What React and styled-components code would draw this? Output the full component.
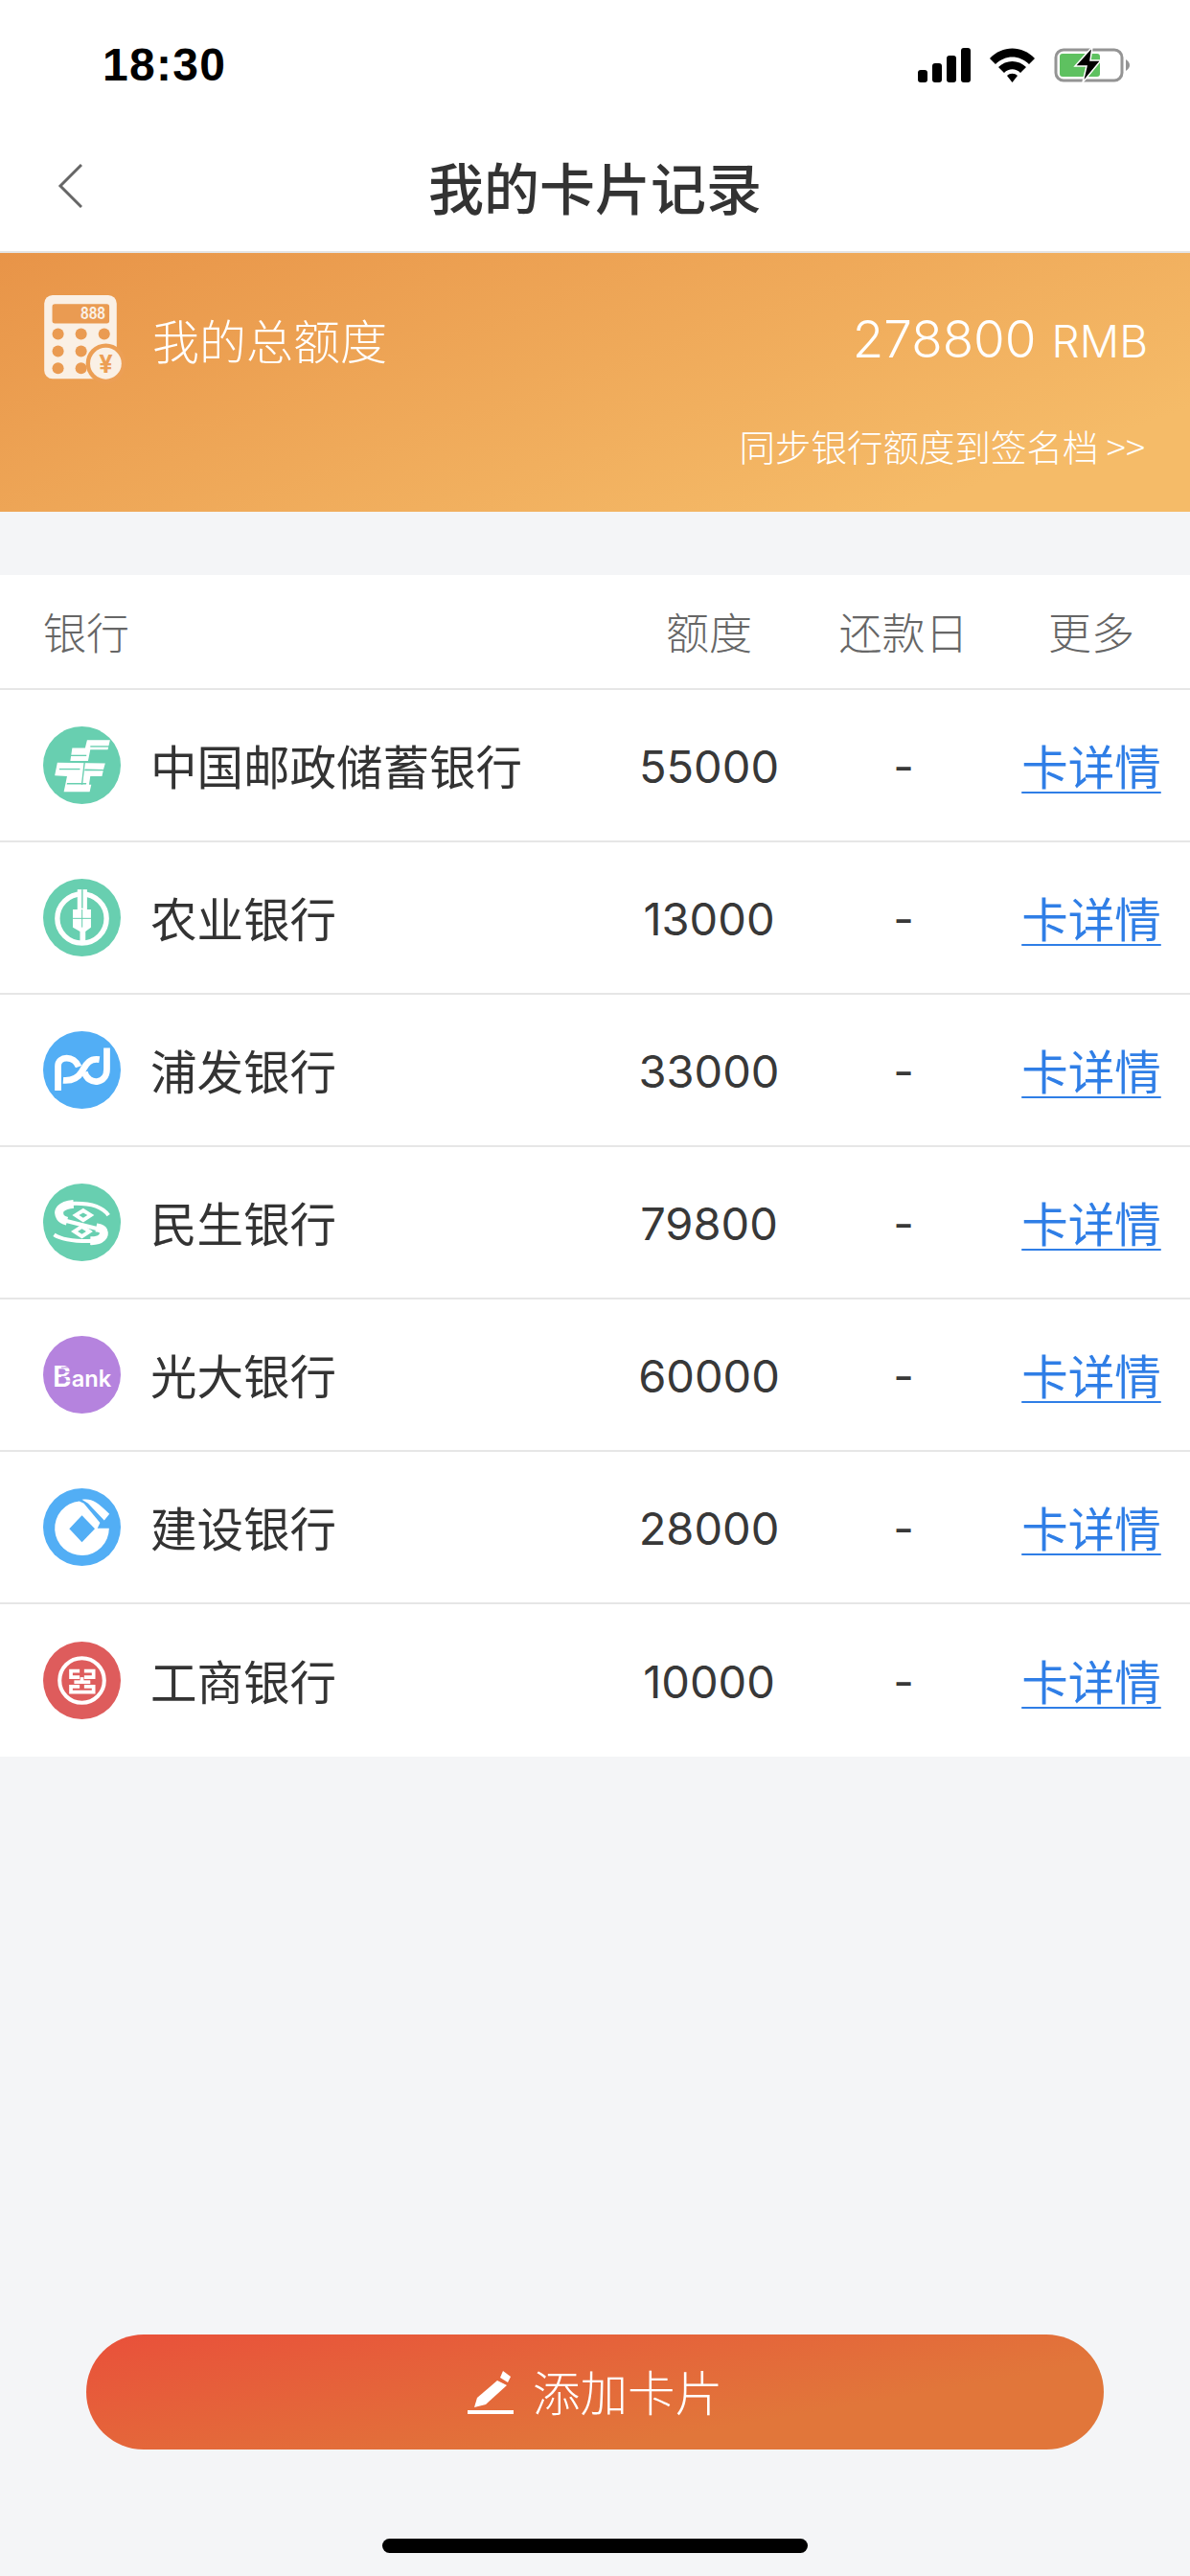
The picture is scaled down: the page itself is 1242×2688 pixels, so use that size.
import styled, { createGlobalStyle } from "styled-components";

const cn = '"Noto Sans CJK SC", sans-serif';
const num = 'Inter, "Noto Sans CJK SC", sans-serif';

const GlobalStyle = createGlobalStyle`
  html, body { margin: 0; padding: 0; background: #f4f5f7; }
  * { box-sizing: border-box; }
`;

const Page = styled.div`
  width: 1242px;
  height: 2688px;
  display: flex;
  flex-direction: column;
  background: #f4f5f7;
  font-family: ${cn};
  overflow: hidden;
`;

const StatusBar = styled.div`
  height: 130px;
  background: #fff;
  display: flex;
  justify-content: space-between;
  align-items: flex-start;
  padding: 50px 62px 0 107px;
`;

const Time = styled.div`
  font-family: "Liberation Sans", Arial, sans-serif;
  font-weight: 700;
  font-size: 48px;
  line-height: 36px;
  color: #000;
  letter-spacing: 1.3px;
`;

const StatusIcons = styled.div`
  display: flex;
  align-items: center;
  gap: 20px;
  height: 36px;
`;

const Nav = styled.div`
  height: 134px;
  background: #fff;
  border-bottom: 2px solid #e4e4e4;
  display: grid;
  grid-template-columns: 1fr auto 1fr;
  align-items: center;
  padding-bottom: 4px;
`;

const BackLink = styled.div`
  padding-left: 60px;
  display: flex;
`;

const Title = styled.h1`
  margin: 0;
  font-size: 58px;
  font-weight: 500;
  color: #333;
  line-height: 1;
`;

const Banner = styled.div`
  height: 270px;
  background: linear-gradient(160deg, #e89448 0%, #f5bb68 85%);
  padding: 44px 44px 0 46px;
  color: #fff;
  display: flex;
  flex-direction: column;
`;

const BannerTop = styled.div`
  display: flex;
  align-items: center;
  height: 92px;
`;

const BannerLabel = styled.div`
  font-size: 49px;
  font-weight: 300;
  margin-left: 27px;
  line-height: 1;
  padding-bottom: 2px;
`;

const Total = styled.div`
  margin-left: auto;
  font-family: ${num};
  font-weight: 300;
  font-size: 53px;
  line-height: 1;
  span { font-size: 46px; margin-left: 16px; }
`;

const Sync = styled.div`
  margin-top: 46px;
  align-self: flex-end;
  font-size: 37.5px;
  font-weight: 300;
  line-height: 1;
  margin-right: 3px;
`;

const Table = styled.div`
  margin-top: 66px;
  background: #fff;
`;

const Row = styled.div`
  display: grid;
  grid-template-columns: 585px 220px 186px 206px;
  align-items: center;
  padding-left: 45px;
  height: ${(p) => p.$h}px;
  border-bottom: ${(p) => (p.$last ? "none" : "2px solid #e6e6e6")};
`;

const HeadCell = styled.div`
  font-size: 45px;
  font-weight: 300;
  color: #666;
  text-align: ${(p) => (p.$left ? "left" : "center")};
  padding-bottom: 2px;
`;

const BankCell = styled.div`
  display: flex;
  align-items: center;
  gap: 31px;
`;

const BankName = styled.span`
  font-size: 48.5px;
  font-weight: 400;
  color: #333;
  padding-bottom: 1px;
`;

const Amount = styled.div`
  font-family: ${num};
  font-size: 47px;
  font-weight: 400;
  color: #383838;
  text-align: center;
  padding-top: 2px;
`;

const Dash = styled(Amount)``;

const DetailLink = styled.a`
  font-size: 48.5px;
  font-weight: 400;
  color: #2f7ee6;
  text-decoration: underline;
  text-underline-offset: 7px;
  text-decoration-thickness: 2px;
  text-align: center;
  padding-bottom: 1px;
`;

const Spacer = styled.div`
  flex: 1;
`;

const AddButton = styled.button`
  width: 1062px;
  height: 120px;
  margin: 0 90px 93px;
  border: none;
  border-radius: 60px;
  background: linear-gradient(170deg, #e9503a 0%, #e1763a 70%);
  color: #fff;
  font-family: ${cn};
  font-size: 49.5px;
  font-weight: 300;
  display: flex;
  align-items: center;
  justify-content: center;
  gap: 20px;
  span { padding-bottom: 4px; }
`;

const HomeBar = styled.div`
  width: 444px;
  height: 15px;
  border-radius: 8px;
  background: #000;
  margin: 0 399px 24px;
`;

const BankSvg = styled.svg`
  width: 81px;
  height: 81px;
  flex: none;
`;

// coordinates below come from 3x crops of the logos, circle is at 76..316
function Logo({ color, cy = 178, children }) {
  return (
    <BankSvg viewBox={`76 ${cy - 120} 240 240`}>
      <circle cx="196" cy={cy} r="120" fill={color} />
      {children}
    </BankSvg>
  );
}

function PostalLogo() {
  return (
    <Logo color="#68cfb0" cy={178}>
      <g fill="#fff">
        <polygon points="212,100 283,100 276,130 222,130 215,165 160,165 166,125 206,125" />
        <polygon points="120,170 268,172 263,190 258,212 222,212 218,238 225,238 220,260 140,260 146,232 150,212 112,210" />
      </g>
      <g fill="#68cfb0">
        <rect x="222" y="118" width="60" height="4" />
        <rect x="162" y="146" width="48" height="4" />
        <rect x="126" y="188" width="64" height="4" />
        <polygon points="205,190 264,191 263,195 204,195" />
        <polygon points="150,233 210,233 209,237 149,237" />
        <polygon points="202,170 206,170 198,238 194,238" />
      </g>
    </Logo>
  );
}

function AgriLogo() {
  return (
    <Logo color="#68cfb0" cy={175}>
      <circle cx="196" cy="178" r="76" fill="none" stroke="#fff" strokeWidth="16" />
      <g fill="#fff">
        <rect x="182" y="88" width="30" height="62" />
        <polygon points="168,150 224,150 224,205 207,218 207,250 190,250 190,218 168,205" />
      </g>
      <rect x="195" y="88" width="4" height="58" fill="#68cfb0" />
      <rect x="168" y="176" width="56" height="3" fill="#68cfb0" />
      <rect x="195" y="150" width="3" height="55" fill="#68cfb0" />
    </Logo>
  );
}

function PufaLogo() {
  return (
    <Logo color="#52aef5" cy={172}>
      <g fill="none" stroke="#fff" strokeWidth="20">
        <path d="M122 236 V160 C122 128 172 125 186 162" />
        <path d="M250 140 C212 134 205 165 195 178 C185 195 165 206 138 204" />
        <path d="M204 178 C216 222 273 216 273 170 V104" />
      </g>
    </Logo>
  );
}

function MinshengLogo() {
  return (
    <Logo color="#68cfb0" cy={200}>
      <path
        d="M278 178 C255 145 200 140 160 142 C112 146 105 182 145 195 L245 220 C285 235 262 258 215 258 C170 258 135 255 110 238"
        fill="none"
        stroke="#fff"
        strokeWidth="12"
      />
      <path d="M170 143 C130 146 118 165 130 185 C135 192 142 194 150 196" fill="none" stroke="#fff" strokeWidth="26" />
      <path d="M222 257 C258 258 268 240 262 226 C258 218 250 218 240 216" fill="none" stroke="#fff" strokeWidth="26" />
      <polygon points="200,156 234,178 200,200 166,178" fill="#fff" />
      <polygon points="200,170 213,178 200,186 187,178" fill="#68cfb0" />
      <polygon points="196,206 230,228 196,250 162,228" fill="#fff" />
      <polygon points="196,220 209,228 196,236 183,228" fill="#68cfb0" />
    </Logo>
  );
}

function EverbrightLogo() {
  return (
    <Logo color="#b583de" cy={196}>
      <text x="106" y="232" fontFamily="Inter, sans-serif" fontSize="70" fontWeight="600" fill="#fff">
        <tspan fontSize="88">B</tspan>ank
      </text>
      <g fill="#b583de">
        <rect x="132" y="172" width="30" height="3" />
        <rect x="132" y="186" width="30" height="3" />
        <rect x="132" y="200" width="30" height="3" />
        <rect x="132" y="214" width="30" height="3" />
      </g>
    </Logo>
  );
}

function CcbLogo() {
  return (
    <Logo color="#52aef5" cy={193}>
      <path d="M280 197 A84 84 0 1 1 188 113 L202 120 L252 180 L244 197 Z" fill="#fff" />
      <path d="M196 108 C225 104 240 112 281 152 L265 172 L215 120 Z" fill="#fff" />
      <polygon points="196,157 236,198 196,240 157,198" fill="#52aef5" />
    </Logo>
  );
}

function IcbcLogo() {
  return (
    <Logo color="#de5c5c" cy={190}>
      <circle cx="196" cy="190" r="69" fill="none" stroke="#fff" strokeWidth="12" />
      <g fill="none" stroke="#fff" strokeWidth="11">
        <path d="M189 161 H162 V180 H189" />
        <path d="M203 161 H232 V180 H203" />
        <path d="M172 195 H222" />
        <path d="M189 209 H162 V226 H232 V209 H203" />
        <path d="M196 180 V195" />
      </g>
    </Logo>
  );
}

function Calculator() {
  const cols = [120, 192, 264];
  const rows = [178, 232, 285];
  return (
    <svg width="86" height="92" viewBox="77 57 256 275" style={{ flex: "none" }}>
      <rect x="77" y="57" width="226" height="261" rx="26" fill="#faf0e5" />
      <rect x="102" y="85" width="178" height="60" rx="8" fill="#ea9b52" />
      <text x="190" y="132" fontFamily="Inter, sans-serif" fontWeight="700" fontSize="50" fill="#faf0e5" textLength="78" lengthAdjust="spacingAndGlyphs">
        888
      </text>
      {rows.map((y) => cols.map((x) => <circle key={x + "-" + y} cx={x} cy={y} r="18" fill="#ea9b52" />))}
      <circle cx="269" cy="270" r="62" fill="#ec9f55" />
      <circle cx="269" cy="270" r="49" fill="#faf0e5" />
      <text x="269" y="298" textAnchor="middle" fontFamily="Inter, sans-serif" fontWeight="700" fontSize="76" fill="#ec9f55">
        ¥
      </text>
    </svg>
  );
}

function Signal() {
  return (
    <svg width="55" height="36" viewBox="0 0 55 36">
      <rect x="0" y="23" width="10" height="13" rx="3" fill="#000" />
      <rect x="15" y="16" width="10" height="20" rx="3" fill="#000" />
      <rect x="30" y="8" width="10" height="28" rx="3" fill="#000" />
      <rect x="45" y="0" width="10" height="36" rx="3" fill="#000" />
    </svg>
  );
}

function Wifi() {
  return (
    <svg width="47" height="36" viewBox="0 0 47 36">
      <path d="M0 11 C13 -3 34 -3 47 11 L41 17 C31 7 16 7 6 17 Z" fill="#000" />
      <path d="M9 20 C17 12 30 12 38 20 L32 26 C27 21 20 21 15 26 Z" fill="#000" />
      <path d="M18 29 C21 26 26 26 29 29 L23.5 36 Z" fill="#000" />
    </svg>
  );
}

function Battery() {
  return (
    <svg width="80" height="38" viewBox="0 0 80 38">
      <rect x="2" y="3" width="69" height="32" rx="8" fill="#fff" stroke="#949494" strokeWidth="3" />
      <rect x="6" y="7" width="42" height="24" rx="3" fill="#5ec160" />
      <path d="M75 13 C78 15 79 17 79 19 C79 21 78 23 75 25 Z" fill="#949494" />
      <path d="M40 0 L22 20 H34 L30 37 L49 14 H38 Z" fill="#000" stroke="#fff" strokeWidth="1.5" />
    </svg>
  );
}

function BackArrow() {
  return (
    <svg width="26" height="46" viewBox="0 0 26 46">
      <path d="M25 1 L3 23 L25 45" fill="none" stroke="#666" strokeWidth="3" />
    </svg>
  );
}

function Pencil() {
  return (
    <svg width="48" height="45" viewBox="0 0 48 45">
      <path d="M37 0 L45 6 L42 12 L34 7 Z" fill="#fff" />
      <path d="M31 10 L41 15 L19 35 L7 38 L10 28 Z" fill="#fff" />
      <rect x="0" y="41" width="48" height="4" fill="#fff" />
    </svg>
  );
}

const banks = [
  { name: "中国邮政储蓄银行", amount: "55000", logo: <PostalLogo /> },
  { name: "农业银行", amount: "13000", logo: <AgriLogo /> },
  { name: "浦发银行", amount: "33000", logo: <PufaLogo /> },
  { name: "民生银行", amount: "79800", logo: <MinshengLogo /> },
  { name: "光大银行", amount: "60000", logo: <EverbrightLogo /> },
  { name: "建设银行", amount: "28000", logo: <CcbLogo /> },
  { name: "工商银行", amount: "10000", logo: <IcbcLogo /> },
];

export default function App() {
  return (
    <Page>
      <GlobalStyle />
      <StatusBar>
        <Time>18:30</Time>
        <StatusIcons>
          <Signal />
          <Wifi />
          <Battery />
        </StatusIcons>
      </StatusBar>
      <Nav>
        <BackLink>
          <BackArrow />
        </BackLink>
        <Title>我的卡片记录</Title>
      </Nav>
      <Banner>
        <BannerTop>
          <Calculator />
          <BannerLabel>我的总额度</BannerLabel>
          <Total>
            278800<span>RMB</span>
          </Total>
        </BannerTop>
        <Sync>同步银行额度到签名档 &gt;&gt;</Sync>
      </Banner>
      <Table>
        <Row $h={120}>
          <HeadCell $left>银行</HeadCell>
          <HeadCell>额度</HeadCell>
          <HeadCell>还款日</HeadCell>
          <HeadCell>更多</HeadCell>
        </Row>
        {banks.map((b, i) => (
          <Row key={b.name} $h={159} $last={i === banks.length - 1}>
            <BankCell>
              {b.logo}
              <BankName>{b.name}</BankName>
            </BankCell>
            <Amount>{b.amount}</Amount>
            <Dash>-</Dash>
            <DetailLink>卡详情</DetailLink>
          </Row>
        ))}
      </Table>
      <Spacer />
      <AddButton>
        <Pencil />
        <span>添加卡片</span>
      </AddButton>
      <HomeBar />
    </Page>
  );
}
